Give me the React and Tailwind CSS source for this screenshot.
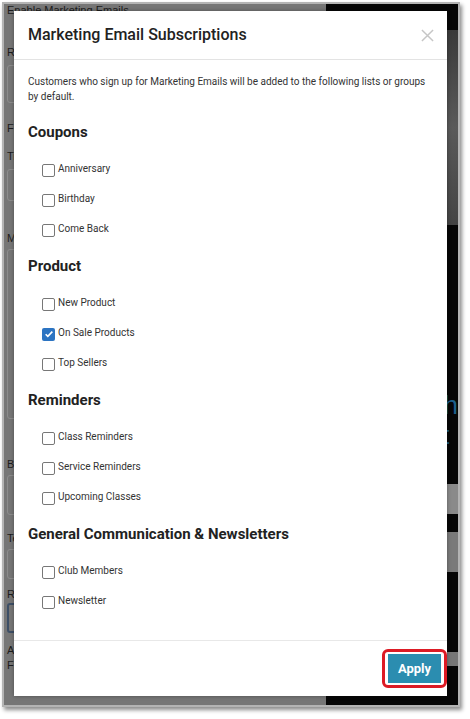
import React from 'react';

const sections = [
  { title: 'Coupons', items: [{ label: 'Anniversary' }, { label: 'Birthday' }, { label: 'Come Back' }] },
  { title: 'Product', items: [{ label: 'New Product' }, { label: 'On Sale Products', checked: true }, { label: 'Top Sellers' }] },
  { title: 'Reminders', items: [{ label: 'Class Reminders' }, { label: 'Service Reminders' }, { label: 'Upcoming Classes' }] },
  { title: 'General Communication & Newsletters', items: [{ label: 'Club Members' }, { label: 'Newsletter' }] },
];

function CheckRow({ label, checked }) {
  return (
    <label className="flex h-[30px] items-center">
      {checked ? (
        <span className="flex h-[13px] w-[13px] items-center justify-center rounded-[2px] bg-[#2c74c2]">
          <svg viewBox="0 0 12 12" className="h-[10px] w-[10px]">
            <path d="M2 6.3l2.6 2.6L10 3.2" fill="none" stroke="#fff" strokeWidth="2" />
          </svg>
        </span>
      ) : (
        <span className="h-[13px] w-[13px] rounded-[2px] border border-[#777] bg-white" />
      )}
      <span className="-mt-[3px] ml-[3px] text-[10px] text-[#333]">{label}</span>
    </label>
  );
}

function Section({ title, items, first }) {
  return (
    <div className={first ? 'mt-[18px]' : 'mt-[11px]'}>
      <h3 className="text-[15px] font-bold leading-[20px] text-[#222]">{title}</h3>
      <div className="mt-[13px] pl-[14px]">
        {items.map((it) => (
          <CheckRow key={it.label} {...it} />
        ))}
      </div>
    </div>
  );
}

function LeftPage() {
  return (
    <div className="flex w-[341px] flex-col bg-[#767676] pl-[3px] text-[11px] leading-[14px] text-[#1c1c1c]">
      <div className="mt-[-1px] whitespace-nowrap">Enable Marketing Emails</div>
      <div className="mt-[28px]">Referral</div>
      <div className="mt-[6px] h-[38px] w-[30px] rounded-[3px] border border-[#8c8c8c]" />
      <div className="mt-[18px]">First</div>
      <div className="mt-[14px]">Title</div>
      <div className="mt-[6px] h-[32px] w-[30px] rounded-[3px] border border-[#8c8c8c]" />
      <div className="mt-[30px]">Message</div>
      <div className="mt-[4px] h-[170px] w-[30px] rounded-[3px] border border-[#8c8c8c]" />
      <div className="mt-[38px]">Button</div>
      <div className="mt-[4px] h-[40px] w-[30px] rounded-[3px] border border-[#8c8c8c]" />
      <div className="mt-[16px]">Terms</div>
      <div className="mt-[4px] h-[30px] w-[30px] rounded-[3px] border border-[#8c8c8c]" />
      <div className="mt-[8px]">Reward</div>
      <div className="mt-[2px] h-[30px] w-[30px] rounded-[3px] border-2 border-[#3d4f66]" />
      <div className="mt-[10px]">Auto</div>
      <div className="mt-[1px]">Fine</div>
    </div>
  );
}

function RightPage() {
  return (
    <div className="flex flex-1 flex-col bg-[#060606] text-[11px] leading-[14px]">
      <div className="h-[26px]" />
      <div className="h-[195px] bg-gradient-to-b from-[#3a3a3a] via-[#5a5a5a] to-[#444]" />
      <div className="h-[165px]" />
      <div className="pl-[102px] text-[26px] leading-[30px] text-[#1d5f8a]">Th</div>
      <div className="pl-[102px] text-[26px] leading-[30px] text-[#1d5f8a]">ot</div>
      <div className="pl-[102px] text-[8px] leading-[10px] text-[#9a9a9a]">mem</div>
      <div className="pl-[102px] text-[8px] leading-[10px] text-[#9a9a9a]">first</div>
      <div className="mt-[14px] flex h-[30px] items-center bg-[#8a8a8a] pl-[102px] text-[12px] text-[#333]">N</div>
      <div className="mt-[18px] h-[40px] bg-[#7a7a7a]" />
      <div className="mt-[80px] flex h-[14px] items-center bg-[#777] pl-[102px] text-[#111]" />
    </div>
  );
}

function Modal() {
  return (
    <div className="absolute left-[10px] top-[7px] flex h-[685px] w-[433px] flex-col bg-white font-['Roboto',sans-serif] shadow-[0_0_4px_rgba(0,0,0,0.35)]">
      <div className="flex h-[49px] shrink-0 items-center justify-between border-b border-[#e3e3e3] pl-[14px] pr-[13px]">
        <h2 className="text-[16px] font-medium text-[#222]">Marketing Email Subscriptions</h2>
        <svg viewBox="0 0 14 14" className="h-[13px] w-[13px]">
          <path d="M1 1l12 12M13 1L1 13" stroke="#c6c6c6" strokeWidth="1.6" />
        </svg>
      </div>
      <div className="flex-1 px-[14px] pt-[14px]">
        <p className="text-[10px] leading-[15px] text-[#333]">
          Customers who sign up for Marketing Emails will be added to the following lists or groups by default.
        </p>
        {sections.map((s, i) => (
          <Section key={s.title} {...s} first={i === 0} />
        ))}
      </div>
      <div className="flex h-[56px] shrink-0 items-center justify-end border-t border-[#e8e8e8]">
        <div className="rounded-[6px] border-[3px] border-[#dc1b25] px-[3px] py-[2px]">
          <button className="flex h-[29px] w-[53px] items-center justify-center bg-[#2b8db0] text-[13px] font-bold text-white">
            Apply
          </button>
        </div>
      </div>
    </div>
  );
}

export default function App() {
  return (
    <div className="h-[719px] w-[470px] overflow-hidden bg-white pl-[2px] pt-[2px] font-['Liberation_Sans',sans-serif]">
      <div className="h-[705px] w-[458px] border-2 border-[#b4b4b4] shadow-[2px_3px_4px_rgba(0,0,0,0.45)]">
        <div className="relative flex h-full w-full overflow-hidden">
          <LeftPage />
          <RightPage />
          <Modal />
        </div>
      </div>
    </div>
  );
}
